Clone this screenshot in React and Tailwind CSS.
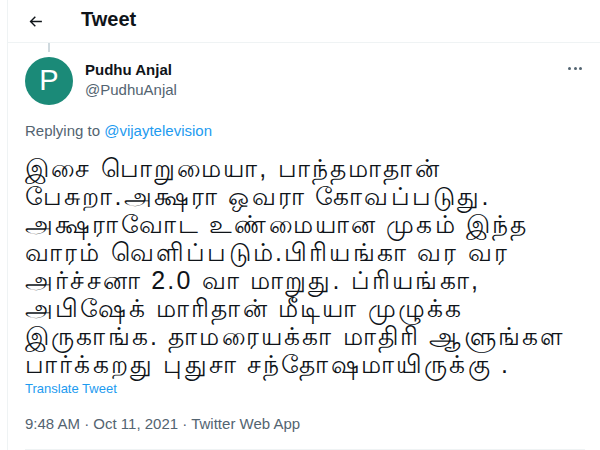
export default function App() {
  const lines = [
    "இசை பொறுமையா, பாந்தமாதான்",
    "பேசுறா.அக்ஷரா ஒவரா கோவப்படுது.",
    "அக்ஷராவோட உண்மையான முகம் இந்த",
    "வாரம் வெளிப்படும்.பிரியங்கா வர வர",
    "அர்ச்சனா 2.0 வா மாறுது. ப்ரியங்கா,",
    "அபிஷேக் மாரிதான் மீடியா முழுக்க",
    "இருகாங்க. தாமரையக்கா மாதிரி ஆளுங்கள",
    "பார்க்கறது புதுசா சந்தோஷமாயிருக்கு .",
  ];
  return (
    <div className="w-[600px] h-[450px] bg-white overflow-hidden font-['Liberation_Sans',sans-serif] text-[#0f1419]">
      <div className="ml-[7px] h-full border-l border-[#eff3f4]">
        <div className="h-[43px] flex items-center border-b border-[#eff3f4]">
          <svg viewBox="0 0 24 24" className="w-[17px] h-[17px] ml-[19px] fill-[#0f1419]">
            <path d="M7.414 13l5.043 5.04-1.414 1.42L3.586 12l7.457-7.46 1.414 1.42L7.414 11H21v2H7.414z" />
          </svg>
          <div className="ml-[37px] text-[20px] font-bold leading-none mt-[-4px]">Tweet</div>
        </div>
        <div className="pl-[17px] pr-[15px]">
          <div className="w-[2px] h-[9px] bg-[#cfd9de] ml-[23px]"></div>
          <div className="flex items-start mt-[5px]">
            <div className="w-[48px] h-[48px] rounded-full bg-[#1b8a78] flex items-center justify-center text-white text-[29px] font-['Liberation_Sans',sans-serif] shrink-0">
              P
            </div>
            <div className="ml-[12px] mt-[3px] flex-1">
              <div className="text-[15px] font-bold leading-[20px]">Pudhu Anjal</div>
              <div className="text-[15px] leading-[20px] text-[#536471]">@PudhuAnjal</div>
            </div>
            <div className="mt-[10px] mr-[3px] flex gap-[2.5px]">
              <span className="w-[3px] h-[3px] rounded-full bg-[#536471]"></span>
              <span className="w-[3px] h-[3px] rounded-full bg-[#536471]"></span>
              <span className="w-[3px] h-[3px] rounded-full bg-[#536471]"></span>
            </div>
          </div>
          <div className="mt-[16px] text-[15px] leading-[20px] text-[#536471]">
            Replying to <span className="text-[#1d9bf0]">@vijaytelevision</span>
          </div>
          <div className="mt-[13px] text-[25px] leading-[28px] tracking-[2.2px] text-[#0f1419]">
            {lines.map((l, i) => (
              <div key={i} className="whitespace-nowrap">{l}</div>
            ))}
          </div>
          <div className="mt-[3px] text-[13px] leading-[16px] text-[#1d9bf0]">Translate Tweet</div>
          <div className="mt-[17px] text-[15px] leading-[20px] text-[#536471]">
            9:48 AM · Oct 11, 2021 · Twitter Web App
          </div>
          <div className="mt-[15px] border-b border-[#eff3f4]"></div>
        </div>
      </div>
    </div>
  );
}
